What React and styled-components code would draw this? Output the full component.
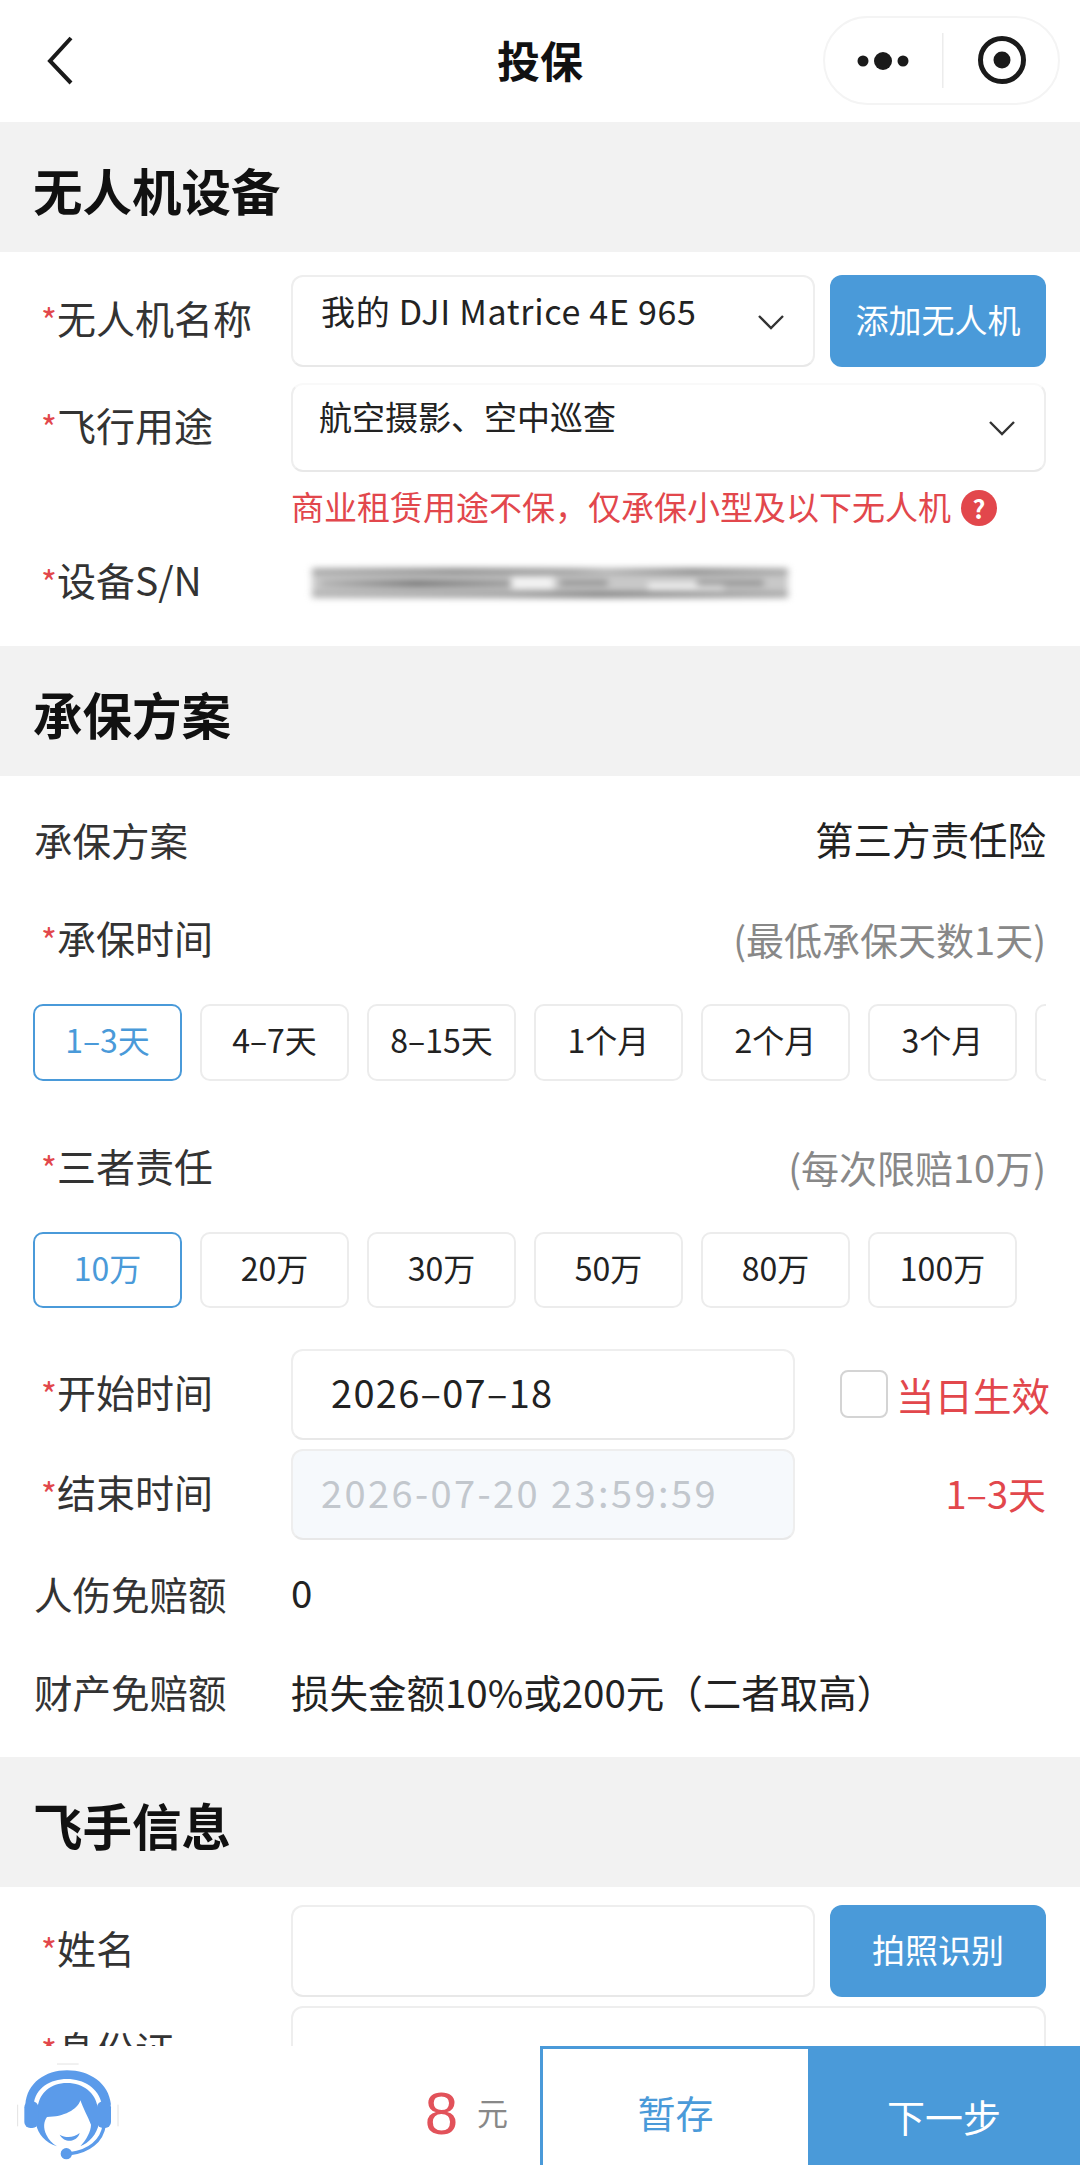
import React from "react";
import styled, { createGlobalStyle } from "styled-components";

const BLUE = "#4a9ad9";
const RED = "#e2474c";
const FONT = `"Noto Sans CJK SC", "Noto Sans", sans-serif`;

const GlobalStyle = createGlobalStyle`
  html, body {
    margin: 0;
    padding: 0;
    background: #fff;
  }
  body {
    font-family: ${FONT};
  }
`;

const Page = styled.div`
  position: relative;
  width: 1080px;
  height: 2165px;
  overflow: hidden;
  background: #fff;
`;

const NavBar = styled.div`
  position: relative;
  height: 122px;
  box-sizing: border-box;
  padding-bottom: 4px;
  display: flex;
  align-items: center;
  justify-content: center;
`;

const NavTitle = styled.div`
  font-size: 43px;
  font-weight: 700;
  color: #111;
`;

const BackIcon = styled.svg`
  position: absolute;
  left: 44px;
  top: 34px;
`;

const Capsule = styled.div`
  position: absolute;
  left: 823px;
  top: 16px;
  width: 237px;
  height: 89px;
  box-sizing: border-box;
  border: 2px solid #f4f4f4;
  border-radius: 45px;
  display: flex;
  align-items: center;
`;

const SectionHead = styled.div`
  height: 130px;
  box-sizing: border-box;
  padding: 5px 0 0 33px;
  display: flex;
  align-items: center;
  background: #f2f2f2;
  font-size: 49.5px;
  font-weight: 700;
  color: #111;
`;

const Body = styled.div`
  padding: ${({ $top }) => $top}px 34px ${({ $bottom }) => $bottom}px;
`;

const Row = styled.div`
  display: flex;
  align-items: center;
  justify-content: ${({ $between }) => ($between ? "space-between" : "flex-start")};
  height: ${({ $height }) => $height || 60}px;
  margin-top: ${({ $top }) => $top || 0}px;
`;

const Label = styled.div`
  flex: ${({ $free }) => ($free ? "0 0 auto" : "0 0 257px")};
  box-sizing: border-box;
  padding: 0 0 5px ${({ $plain }) => ($plain ? 0 : 7)}px;
  font-size: ${({ $plain }) => ($plain ? 38.5 : 39)}px;
  line-height: 60px;
  color: #333;
  white-space: nowrap;
`;

const Star = styled.span`
  color: ${RED};
  font-size: 34px;
`;

const Field = styled.div`
  flex: ${({ $width }) => ($width ? `0 0 ${$width}px` : "1")};
  height: 100%;
  box-sizing: border-box;
  display: flex;
  align-items: ${({ $pad }) => ($pad ? "flex-start" : "center")};
  justify-content: space-between;
  padding: ${({ $pad }) => ($pad ? `${$pad}px 28px 0 28px` : "0 28px 6px 0")};
  padding-left: ${({ $inset }) => $inset || 28}px;
  border: 2px solid #eee;
  border-top-color: ${({ $open }) => ($open ? "#f9f9f9" : "#eee")};
  border-bottom-color: #e8e8e8;
  border-radius: 12px;
  background: ${({ $disabled }) => ($disabled ? "#f6f9fc" : "#fff")};
  font-size: ${({ $size }) => $size || 34}px;
  letter-spacing: ${({ $spacing }) => $spacing || 0}px;
  color: ${({ $disabled }) => ($disabled ? "#c2c7cd" : "#222")};
  white-space: nowrap;
`;

const ChevronIcon = styled.svg`
  margin-top: 28px;
  flex: none;
`;

const ActionButton = styled.div`
  flex: 0 0 216px;
  height: 100%;
  box-sizing: border-box;
  padding-bottom: 4px;
  margin-left: 15px;
  display: flex;
  align-items: center;
  justify-content: center;
  border-radius: 12px;
  background: ${BLUE};
  color: #fff;
  font-size: 33px;
`;

const Hint = styled.div`
  display: flex;
  align-items: center;
  gap: 10px;
  height: 36px;
  margin: 18px 0 0 257px;
  color: ${RED};
  white-space: nowrap;
`;

const HintText = styled.span`
  font-size: 33px;
  margin-bottom: 5px;
`;

const HelpDot = styled.span`
  width: 36px;
  height: 36px;
  border-radius: 50%;
  background: ${RED};
  color: #fff;
  font-size: 25px;
  font-weight: 700;
  display: flex;
  align-items: center;
  justify-content: center;
`;

// serial number is smudged out on purpose
const Smudge = styled.div`
  width: 476px;
  height: 28px;
  margin-left: 21px;
  filter: blur(3.5px);
  background:
    linear-gradient(90deg, #888, #555 30%, #777 55%, #999 62%, #555 80%, #888) 0 0 / 100% 4px no-repeat,
    linear-gradient(90deg, #999, #777 40%, #444 60%, #888) 0 100% / 100% 4px no-repeat,
    linear-gradient(90deg, #aaa, #555 50%, #888) 3% 50% / 40% 5px no-repeat,
    linear-gradient(#777, #777) 58% 50% / 10% 4px no-repeat,
    linear-gradient(#777, #777) 94% 50% / 14% 4px no-repeat,
    linear-gradient(#f4f4f4, #f4f4f4) 46% 50% / 9% 12px no-repeat,
    linear-gradient(#f2f2f2, #f2f2f2) 84% 65% / 16% 7px no-repeat,
    #c8c8c8;
`;

const Value = styled.div`
  padding-bottom: ${({ $lift }) => $lift || 5}px;
  font-size: ${({ $size }) => $size || 38.5}px;
  color: ${({ $color }) => $color || "#222"};
  white-space: nowrap;
`;

const ChipRow = styled.div`
  display: flex;
  gap: 18px;
  height: ${({ $height }) => $height}px;
  margin: ${({ $top }) => $top}px 0 0 -1px;
  overflow: hidden;
`;

const Chip = styled.div`
  flex: 0 0 149px;
  box-sizing: border-box;
  padding-bottom: 7px;
  display: flex;
  align-items: center;
  justify-content: center;
  border: 2px solid ${({ $active }) => ($active ? BLUE : "#ececec")};
  border-radius: 10px;
  color: ${({ $active }) => ($active ? BLUE : "#222")};
  font-size: 32px;
  white-space: nowrap;
`;

const CheckBox = styled.span`
  width: 48px;
  height: 48px;
  box-sizing: border-box;
  border: 2px solid #d4d4d4;
  border-radius: 8px;
`;

const SameDay = styled.div`
  display: flex;
  align-items: center;
  gap: 8px;
  margin-left: 45px;
  padding-bottom: 2px;
  font-size: 38.5px;
  color: ${RED};
  white-space: nowrap;
`;

const RangeNote = styled.div`
  flex: 1;
  padding-bottom: 5px;
  text-align: right;
  font-size: 38px;
  color: ${RED};
`;

const BottomBar = styled.div`
  position: absolute;
  left: 0;
  right: 0;
  bottom: 0;
  height: 119px;
  display: flex;
  background: #fff;
`;

const ServiceIcon = styled.svg`
  position: absolute;
  left: 17px;
  top: 17px;
`;

const Price = styled.div`
  flex: 1;
  display: flex;
  align-items: center;
  justify-content: flex-end;
  gap: 19px;
  padding: 12px 32px 0 0;
`;

const PriceNumber = styled.span`
  margin-top: 5px;
  font-family: "Liberation Sans", sans-serif;
  font-size: 60px;
  color: #e2525a;
  line-height: 1;
`;

const PriceUnit = styled.span`
  font-size: 31px;
  color: #888;
`;

const SaveButton = styled.div`
  width: 268px;
  box-sizing: border-box;
  padding-top: 8px;
  display: flex;
  align-items: center;
  justify-content: center;
  border-top: 3px solid ${BLUE};
  border-left: 3px solid ${BLUE};
  font-size: 38px;
  color: ${BLUE};
`;

const NextButton = styled.div`
  width: 272px;
  display: flex;
  align-items: center;
  justify-content: center;
  padding-top: 19px;
  box-sizing: border-box;
  background: ${BLUE};
  font-size: 38px;
  color: #fff;
`;

const Chevron = () => (
  <ChevronIcon width="28" height="16" viewBox="0 0 28 16" fill="none">
    <path d="M2 2 L14 14 L26 2" stroke="#333" strokeWidth="2.4" />
  </ChevronIcon>
);

const Required = ({ children }) => (
  <Label>
    <Star>*</Star>
    {children}
  </Label>
);

const periods = ["1–3天", "4–7天", "8–15天", "1个月", "2个月", "3个月", ""];
const limits = ["10万", "20万", "30万", "50万", "80万", "100万"];

const App = () => {
  return (
    <Page>
      <GlobalStyle />
      <NavBar>
        <BackIcon width="32" height="54" viewBox="0 0 32 54" fill="none">
          <path d="M27 4 L6 27 L27 49" stroke="#1a1a1a" strokeWidth="4" />
        </BackIcon>
        <NavTitle>投保</NavTitle>
        <Capsule>
          <svg width="233" height="85" viewBox="0 0 233 85">
            <circle cx="38" cy="43" r="5.5" fill="#1a1a1a" />
            <circle cx="58" cy="43" r="9" fill="#1a1a1a" />
            <circle cx="78" cy="43" r="5.5" fill="#1a1a1a" />
            <rect x="117" y="15" width="1.5" height="55" fill="#ececec" />
            <circle cx="177" cy="42" r="21.5" fill="none" stroke="#1a1a1a" strokeWidth="5" />
            <circle cx="177" cy="42" r="8.5" fill="#1a1a1a" />
          </svg>
        </Capsule>
      </NavBar>

      <SectionHead>无人机设备</SectionHead>
      <Body $top={23} $bottom={33}>
        <Row $height={92}>
          <Required>无人机名称</Required>
          <Field $pad={9} $spacing={0.7}>
            我的 DJI Matrice 4E 965
            <Chevron />
          </Field>
          <ActionButton>添加无人机</ActionButton>
        </Row>
        <Row $height={89} $top={16}>
          <Required>飞行用途</Required>
          <Field $pad={7} $size={33} $inset={26} $open>
            航空摄影、空中巡查
            <Chevron />
          </Field>
        </Row>
        <Hint>
          <HintText>商业租赁用途不保，仅承保小型及以下无人机</HintText>
          <HelpDot>?</HelpDot>
        </Hint>
        <Row $top={27}>
          <Required>设备S/N</Required>
          <Smudge />
        </Row>
      </Body>

      <SectionHead>承保方案</SectionHead>
      <Body $top={35} $bottom={34}>
        <Row $between>
          <Label $plain $free>承保方案</Label>
          <Value $lift={7}>第三方责任险</Value>
        </Row>
        <Row $between $top={40}>
          <Required>承保时间</Required>
          <Value $size={38} $color="#888">(最低承保天数1天)</Value>
        </Row>
        <ChipRow $height={77} $top={33}>
          {periods.map((p, i) => (
            <Chip key={i} $active={i === 0}>{p}</Chip>
          ))}
        </ChipRow>
        <Row $between $top={58}>
          <Required>三者责任</Required>
          <Value $size={38} $color="#888">(每次限赔10万)</Value>
        </Row>
        <ChipRow $height={76} $top={33}>
          {limits.map((l, i) => (
            <Chip key={l} $active={i === 0}>{l}</Chip>
          ))}
        </ChipRow>
        <Row $height={91} $top={41}>
          <Required>开始时间</Required>
          <Field $width={504} $size={38} $inset={38} $spacing={1.3}>2026–07–18</Field>
          <SameDay>
            <CheckBox />
            当日生效
          </SameDay>
        </Row>
        <Row $height={91} $top={9}>
          <Required>结束时间</Required>
          <Field $width={504} $size={38} $spacing={2.4} $disabled>2026-07-20 23:59:59</Field>
          <RangeNote>1–3天</RangeNote>
        </Row>
        <Row $top={25}>
          <Label $plain>人伤免赔额</Label>
          <Value $lift={8}>0</Value>
        </Row>
        <Row $top={38}>
          <Label $plain>财产免赔额</Label>
          <Value>损失金额10%或200元（二者取高）</Value>
        </Row>
      </Body>

      <SectionHead>飞手信息</SectionHead>
      <Body $top={18} $bottom={0}>
        <Row $height={92}>
          <Required>姓名</Required>
          <Field />
          <ActionButton>拍照识别</ActionButton>
        </Row>
        <Row $height={92} $top={9}>
          <Required>身份证</Required>
          <Field />
        </Row>
      </Body>

      <BottomBar>
        <ServiceIcon width="104" height="100" viewBox="50 100 312 300">
          {/* customer service agent with headset */}
          <path d="M52 225 V290 M353 225 V290 M170 103 H235" fill="none" stroke="#e2e2e2" strokeWidth="3" />
          <g fill="#5b9bea">
            <path d="M75 225 C80 160 135 122 200 122 C268 122 325 160 332 225 L305 225 C295 175 250 148 200 148 C150 148 105 175 100 225 Z" />
            <path d="M112 232 C118 190 150 160 200 160 C250 160 285 190 292 232 L296 280 C290 315 265 340 240 350 C258 330 272 305 272 285 C262 260 248 235 240 212 C232 240 190 262 140 262 C130 275 128 295 138 315 C145 330 155 340 170 350 C135 340 112 310 108 285 Z" />
            <rect x="72" y="215" width="42" height="80" rx="18" />
            <rect x="290" y="215" width="42" height="80" rx="18" />
            <path d="M178 315 C195 325 220 325 238 310 C232 335 195 345 178 315 Z" />
            <circle cx="198" cy="372" r="17" />
          </g>
          <path d="M312 285 C305 335 265 365 210 372" fill="none" stroke="#5b9bea" strokeWidth="10" />
        </ServiceIcon>
        <Price>
          <PriceNumber>8</PriceNumber>
          <PriceUnit>元</PriceUnit>
        </Price>
        <SaveButton>暂存</SaveButton>
        <NextButton>下一步</NextButton>
      </BottomBar>
    </Page>
  );
};

export default App;
